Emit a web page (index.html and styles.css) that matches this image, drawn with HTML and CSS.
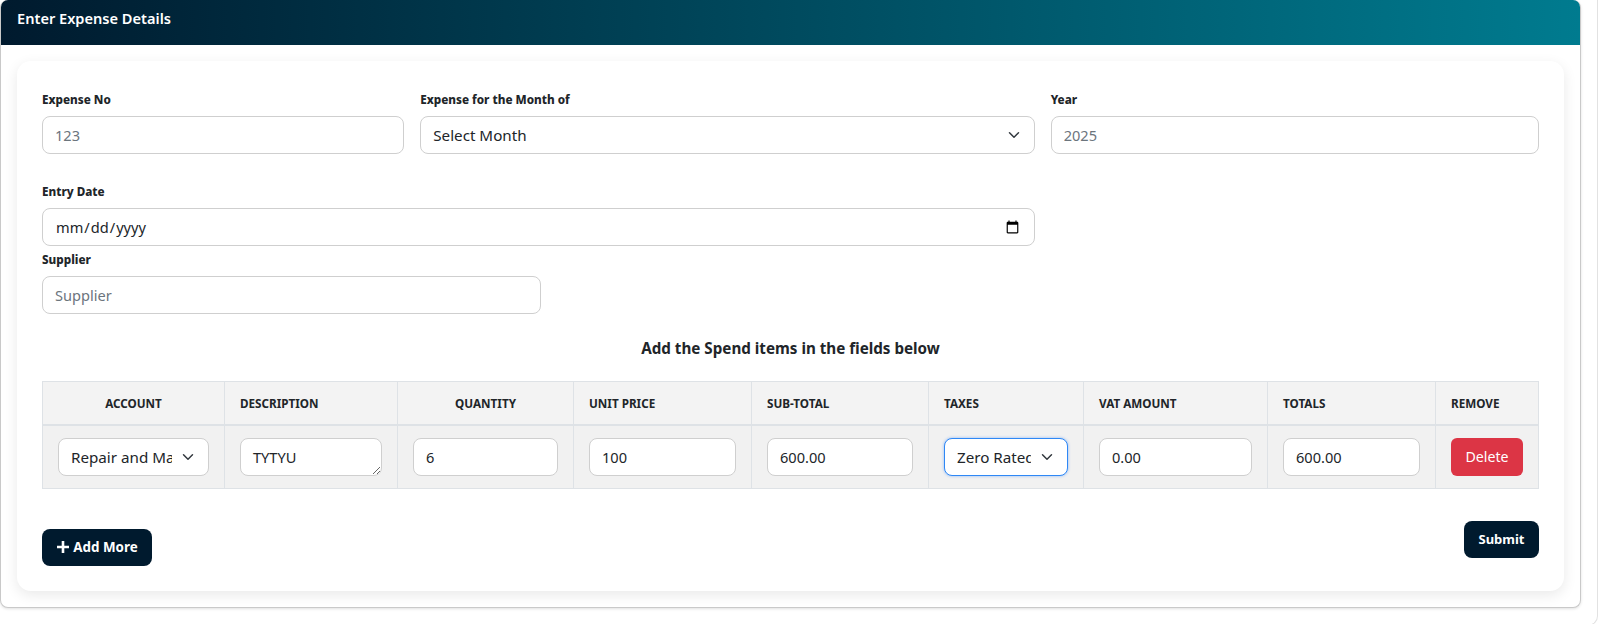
FILE: index.html
```html
<!DOCTYPE html>
<html>
<head>
  <meta charset="UTF-8">
  <title>Enter Expense Details</title>
  <link rel="stylesheet" href="styles.css">
</head>
<body>
  <div class="page-frame">
    <div class="panel">
      <div class="panel-header">Enter Expense Details</div>
      <div class="form-card">
        <form id="expenseForm">
          <div class="row">
            <div class="col-3">
              <label for="expenseNo">Expense No</label>
              <input type="text" id="expenseNo" class="field" placeholder="123">
            </div>
            <div class="col-5">
              <label for="month">Expense for the Month of</label>
              <select id="month" class="field">
                <option>Select Month</option>
              </select>
            </div>
            <div class="col-4">
              <label for="year">Year</label>
              <input type="text" id="year" class="field" placeholder="2025">
            </div>
          </div>

          <div class="row row-date">
            <div class="col-8">
              <label for="entryDate">Entry Date</label>
              <input type="date" id="entryDate" class="field">
            </div>
          </div>

          <div class="supplier">
            <label for="supplier">Supplier</label>
            <input type="text" id="supplier" class="field" placeholder="Supplier">
          </div>

          <h2 class="items-title">Add the Spend items in the fields below</h2>

          <table class="items">
            <colgroup>
              <col class="c-account">
              <col class="c-description">
              <col class="c-quantity">
              <col class="c-price">
              <col class="c-subtotal">
              <col class="c-taxes">
              <col class="c-vat">
              <col class="c-totals">
              <col class="c-remove">
            </colgroup>
            <thead>
              <tr>
                <th class="center">Account</th>
                <th>Description</th>
                <th class="center">Quantity</th>
                <th>Unit Price</th>
                <th>Sub-Total</th>
                <th>Taxes</th>
                <th>VAT Amount</th>
                <th>Totals</th>
                <th>Remove</th>
              </tr>
            </thead>
            <tbody>
              <tr>
                <td>
                  <select class="field">
                    <option>Repair and Maintenance</option>
                  </select>
                </td>
                <td><textarea class="field" rows="1">TYTYU</textarea></td>
                <td><input type="text" class="field" value="6"></td>
                <td><input type="text" class="field" value="100"></td>
                <td><input type="text" class="field" value="600.00"></td>
                <td>
                  <select class="field field-focus">
                    <option>Zero Rated</option>
                  </select>
                </td>
                <td><input type="text" class="field" value="0.00"></td>
                <td><input type="text" class="field" value="600.00"></td>
                <td><button type="button" class="btn-delete">Delete</button></td>
              </tr>
            </tbody>
          </table>

          <div class="actions">
            <button type="button" class="btn-dark btn-add">
              <svg class="plus" viewBox="0 0 14 14" aria-hidden="true"><path d="M7 1v12M1 7h12"></path></svg>Add More
            </button>
            <button type="button" class="btn-dark btn-submit">Submit</button>
          </div>
        </form>
      </div>
    </div>
  </div>
</body>
</html>
```

FILE: styles.css
```css
/* Noto Sans stands in for the original UI font */
body, input, select, textarea, button, label {
  font-family: 'Noto Sans', 'Open Sans', sans-serif;
}
* {
  box-sizing: border-box;
}
html, body {
  overflow: hidden;
}
body {
  margin: 0;
  background: #fff;
  color: #212529;
}
/* Outer box, only its right edge and corner show */
.page-frame {
  width: 1598px;
  height: 626px;
  border-right: 1px solid #e2e2e2;
  border-bottom: 1px solid #e2e2e2;
  border-bottom-right-radius: 10px;
}
.panel {
  width: 1581px;
  height: 608px;
  background: #fff;
  border: 1px solid #c9c9c9;
  border-top: 0;
  border-radius: 8px;
  box-shadow: 0 1px 3px rgba(0, 0, 0, 0.12);
}
.panel-header {
  height: 45px;
  padding: 9px 16px 0;
  background: linear-gradient(90deg, #001a2e 0%, #007b8f 100%);
  border-radius: 7px 7px 0 0;
  color: #fff;
  font-size: 14.6px;
  font-weight: 600;
  line-height: 18px;
}
.form-card {
  width: 1547px;
  height: 530px;
  margin: 16px 0 0 16px;
  padding: 32px 25px 0;
  background: #fff;
  border-radius: 14px;
  box-shadow: 0 4px 14px rgba(0, 0, 0, 0.09);
}
/* Bootstrap style grid */
.row {
  display: flex;
  margin: 0 -8px;
}
.col-3, .col-4, .col-5, .col-8 {
  padding: 0 8px;
}
.col-3 { width: 25%; }
.col-4 { width: 33.3333%; }
.col-5 { width: 41.6667%; }
.col-8 { width: 66.6667%; }
.row-date {
  margin-top: 31px;
}
label {
  display: block;
  height: 15px;
  margin-bottom: 8px;
  color: #212529;
  font-size: 11.7px;
  font-weight: 800;
  line-height: 13px;
}
.field {
  display: block;
  width: 100%;
  height: 38px;
  padding: 6px 12px;
  background: #fff;
  border: 1px solid #cfcfcf;
  border-radius: 8px;
  color: #212529;
  font-size: 14.6px;
  line-height: 24px;
  outline: 0;
}
.field::placeholder {
  color: #6c757d;
  opacity: 1;
}
select.field {
  padding-right: 36px;
  appearance: none;
  font-size: 15.2px;
  background-image: url("data:image/svg+xml,%3csvg xmlns='http://www.w3.org/2000/svg' viewBox='0 0 16 16'%3e%3cpath fill='none' stroke='%23343a40' stroke-linecap='round' stroke-linejoin='round' stroke-width='2' d='m2 5 6 6 6-6'/%3e%3c/svg%3e");
  background-repeat: no-repeat;
  background-position: right 12px center;
  background-size: 16px 12px;
}
textarea.field {
  resize: vertical;
}
.field-focus {
  border-color: #2f88f5;
  box-shadow: 0 0 3px rgba(13, 110, 253, 0.45);
}
.supplier {
  width: 33.3333%;
  margin-top: 7px;
}
.items-title {
  margin: 23px 0 22px;
  color: #212529;
  font-size: 15.2px;
  font-weight: 700;
  line-height: 22px;
  text-align: center;
}
.items {
  width: 1496px;
  border-collapse: collapse;
  table-layout: fixed;
}
.items th, .items td {
  border: 1px solid #dee2e6;
}
.items th {
  height: 43px;
  padding: 0 15px;
  background: #f3f3f3;
  border-bottom-width: 2px;
  color: #212529;
  font-size: 11.7px;
  font-weight: 700;
  text-align: left;
  text-transform: uppercase;
}
.items th.center {
  text-align: center;
}
.items td {
  height: 62px;
  padding: 12px 15px;
  background: #f1f1f1;
  vertical-align: middle;
}
.c-account { width: 182px; }
.c-description { width: 173px; }
.c-quantity { width: 176px; }
.c-price { width: 178px; }
.c-subtotal { width: 177px; }
.c-taxes { width: 155px; }
.c-vat { width: 184px; }
.c-totals { width: 168px; }
.c-remove { width: 103px; }
.btn-delete {
  width: 72px;
  height: 38px;
  padding: 0;
  background: #dc3545;
  border: 0;
  border-radius: 6px;
  color: #fff;
  font-size: 14.2px;
}
.actions {
  display: flex;
  justify-content: space-between;
  align-items: flex-start;
  margin-top: 32px;
}
.btn-dark {
  height: 37px;
  padding: 0;
  background: #001a2e;
  border: 0;
  border-radius: 8px;
  color: #fff;
  font-size: 13px;
  font-weight: 700;
}
.btn-add {
  display: flex;
  align-items: center;
  justify-content: center;
  gap: 3px;
  width: 110px;
  margin-top: 8px;
  font-size: 13.4px;
}
.btn-submit {
  width: 75px;
}
.plus {
  width: 14px;
  height: 14px;
  fill: none;
  stroke: #fff;
  stroke-width: 2.6;
}
```
